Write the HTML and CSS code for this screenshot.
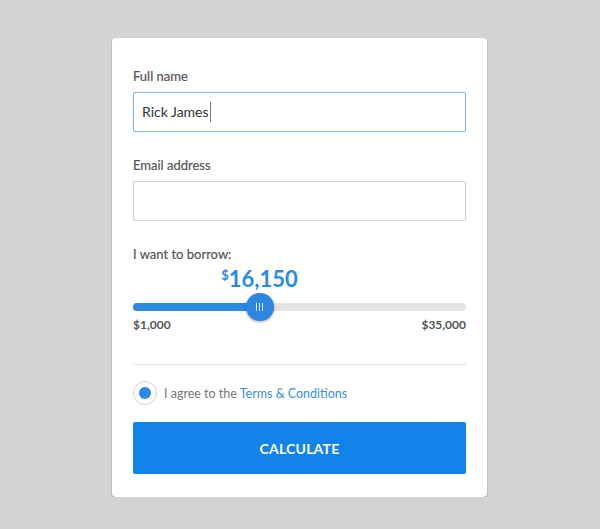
FILE: index.html
```html
<!DOCTYPE html>
<html lang="en">
<head>
  <meta charset="UTF-8">
  <title>Loan Calculator</title>
  <link rel="stylesheet" href="styles.css">
</head>
<body>

<div class="card">
  <!-- Name -->
  <div class="field">
    <label class="label">Full name</label>
    <div class="input focused">Rick James<span class="caret"></span></div>
  </div>

  <!-- Email -->
  <div class="field">
    <label class="label">Email address</label>
    <div class="input"></div>
  </div>

  <!-- Amount slider -->
  <div class="borrow">
    <label class="label">I want to borrow:</label>
    <div class="amount-row">
      <div class="amount" style="left: 38%"><sup>$</sup>16,150</div>
    </div>
    <div class="slider">
      <div class="track">
        <div class="fill" style="width: 38%"></div>
      </div>
      <div class="thumb" style="left: 38%">
        <span></span><span></span><span></span>
      </div>
    </div>
    <div class="range">
      <span>$1,000</span>
      <span>$35,000</span>
    </div>
  </div>

  <hr class="divider">

  <div class="agree">
    <span class="radio"><span class="dot"></span></span>
    <span>I agree to the <a href="#">Terms &amp; Conditions</a></span>
  </div>

  <button class="btn">CALCULATE</button>
</div>

</body>
</html>
```

FILE: styles.css
```css
body {
  margin: 0;
  background-color: #d3d3d3;
  font-family: Lato, "Open Sans", sans-serif;
}

.card {
  width: 333px;
  margin: 38px 0 0 112px;
  padding: 30px 21px 23px;
  background-color: #fff;
  border-radius: 4px;
  box-shadow: 0 1px 2px rgba(0, 0, 0, 0.35);
}

.label {
  display: block;
  font-size: 13px;
  line-height: 16px;
  color: #555;
  margin-bottom: 8px;
  -webkit-text-stroke: 0.2px #555;
}

.field {
  margin-bottom: 25px;
}

.input {
  box-sizing: border-box;
  height: 40px;
  padding: 0 8px;
  border: 1px solid #cfcfcf;
  border-radius: 2px;
  font-size: 14px;
  line-height: 38px;
  color: #333;
}

.input.focused {
  border: 1.5px solid #7cb5ef;
  line-height: 37px;
  box-shadow: 0 0 1px #a9cdf3;
}

.caret {
  display: inline-block;
  width: 1px;
  height: 20px;
  margin-left: 1px;
  vertical-align: -5px;
  background-color: #777;
}

.borrow .label {
  margin-bottom: 2px;
}

.amount-row {
  position: relative;
  height: 30px;
}

.amount {
  position: absolute;
  top: 0;
  transform: translateX(-50%);
  font-size: 22px;
  font-weight: bold;
  line-height: 30px;
  color: #2b8ae5;
  white-space: nowrap;
}

.amount sup {
  font-size: 13px;
  vertical-align: 7px;
  line-height: 0;
}

.slider {
  position: relative;
  height: 22px;
  margin-top: 2px;
  display: flex;
  align-items: center;
}

.track {
  width: 100%;
  height: 8px;
  border-radius: 4px;
  background-color: #e3e3e3;
  overflow: hidden;
}

.fill {
  height: 100%;
  background-color: #2d88e2;
}

.thumb {
  position: absolute;
  top: 50%;
  width: 28px;
  height: 28px;
  margin: -14px 0 0 -14px;
  border-radius: 50%;
  background-color: #2d86df;
  box-shadow: 0 1px 3px rgba(0, 0, 0, 0.35);
  display: flex;
  align-items: center;
  justify-content: center;
  gap: 2px;
}

.thumb span {
  width: 1px;
  height: 8px;
  background-color: #dbeafb;
}

.range {
  display: flex;
  justify-content: space-between;
  font-size: 12px;
  font-weight: bold;
  line-height: 14px;
  color: #555;
}

.divider {
  border: 0;
  border-top: 1px solid #e6e6e6;
  margin: 32px 0 16px;
}

.agree {
  display: flex;
  align-items: center;
  gap: 7px;
  font-size: 12.5px;
  color: #777;
}

.agree a {
  color: #3a8fe8;
  text-decoration: none;
}

.radio {
  box-sizing: border-box;
  width: 24px;
  height: 24px;
  border: 1px solid #d0d0d0;
  border-radius: 50%;
  display: flex;
  align-items: center;
  justify-content: center;
}

.dot {
  width: 12px;
  height: 12px;
  border-radius: 50%;
  background-color: #2d88e8;
}

.btn {
  display: block;
  width: 100%;
  height: 52px;
  margin-top: 17px;
  border: 0;
  border-radius: 2px;
  background-color: #1283e8;
  color: #fff;
  font-family: Lato, "Open Sans", sans-serif;
  font-size: 14px;
  font-weight: bold;
  letter-spacing: 0.2px;
}
```
